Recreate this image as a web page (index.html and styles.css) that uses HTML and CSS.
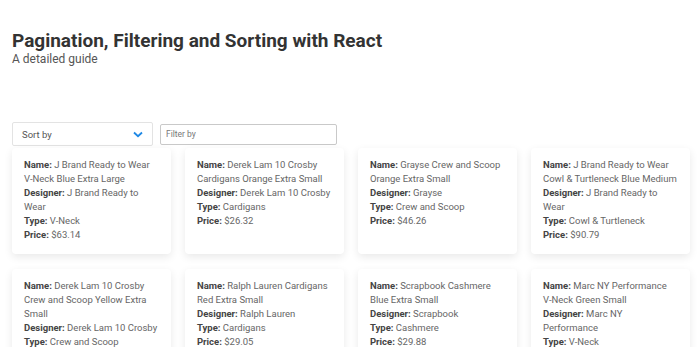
FILE: index.html
```html
<!DOCTYPE html>
<html>
<head>
    <meta charset="utf-8">
    <link rel="stylesheet" href="styles.css">
</head>
<body>
    <header class="intro">
        <h1>Pagination, Filtering and Sorting with React</h1>
        <p>A detailed guide</p>
    </header>

    <div class="controls">
        <div class="sort">
            <span>Sort by</span>
            <svg width="10" height="7" viewBox="0 0 10 7"><path d="M1 1.5 L5 5.2 L9 1.5" fill="none" stroke="#1e88e5" stroke-width="1.8"/></svg>
        </div>
        <input class="filter" type="text" placeholder="Filter by">
    </div>

    <div class="products">
        <div class="card">
            <b>Name:</b> J Brand Ready to Wear <span class="nw">V-Neck</span> Blue Extra Large<br>
            <b>Designer:</b> J Brand Ready to Wear<br>
            <b>Type:</b> V-Neck<br>
            <b>Price:</b> $63.14
        </div>
        <div class="card">
            <b>Name:</b> Derek Lam 10 Crosby Cardigans Orange Extra Small<br>
            <b>Designer:</b> Derek Lam 10 Crosby<br>
            <b>Type:</b> Cardigans<br>
            <b>Price:</b> $26.32
        </div>
        <div class="card">
            <b>Name:</b> Grayse Crew and Scoop Orange Extra Small<br>
            <b>Designer:</b> Grayse<br>
            <b>Type:</b> Crew and Scoop<br>
            <b>Price:</b> $46.26
        </div>
        <div class="card">
            <b>Name:</b> J Brand Ready to Wear Cowl &amp; Turtleneck Blue Medium<br>
            <b>Designer:</b> J Brand Ready to Wear<br>
            <b>Type:</b> Cowl &amp; Turtleneck<br>
            <b>Price:</b> $90.79
        </div>
        <div class="card">
            <b>Name:</b> Derek Lam 10 Crosby Crew and Scoop Yellow Extra Small<br>
            <b>Designer:</b> Derek Lam 10 Crosby<br>
            <b>Type:</b> Crew and Scoop<br>
            <b>Price:</b> $47.12
        </div>
        <div class="card">
            <b>Name:</b> Ralph Lauren Cardigans Red Extra Small<br>
            <b>Designer:</b> Ralph Lauren<br>
            <b>Type:</b> Cardigans<br>
            <b>Price:</b> $29.05
        </div>
        <div class="card">
            <b>Name:</b> Scrapbook Cashmere Blue Extra Small<br>
            <b>Designer:</b> Scrapbook<br>
            <b>Type:</b> Cashmere<br>
            <b>Price:</b> $29.88
        </div>
        <div class="card">
            <b>Name:</b> Marc NY Performance <span class="nw">V-Neck</span> Green Small<br>
            <b>Designer:</b> Marc NY Performance<br>
            <b>Type:</b> V-Neck<br>
            <b>Price:</b> $38.50
        </div>
    </div>
</body>
</html>
```

FILE: styles.css
```css
body {
    margin: 0;
    padding: 0 12px;
    font-family: Roboto, "Liberation Sans", sans-serif;
    color: #333;
    background: #fff;
}

.intro {
    padding-top: 29px;
}

.intro h1 {
    margin: 0;
    font-size: 19px;
    line-height: 23px;
    font-weight: 700;
    color: #333;
}

.intro p {
    margin: 0;
    font-size: 12px;
    line-height: 14px;
    color: #555;
}

.controls {
    display: flex;
    align-items: center;
    gap: 7px;
    margin-top: 56px;
    width: 678px;
}

.sort {
    display: flex;
    align-items: center;
    justify-content: space-between;
    box-sizing: border-box;
    width: 141px;
    height: 24px;
    padding: 0 9px;
    border: 1px solid #e3e3e3;
    border-radius: 2px;
    font-size: 9.5px;
    color: #555;
}

.filter {
    box-sizing: border-box;
    width: 177px;
    height: 21px;
    margin: 0;
    padding: 0 5px;
    border: 1px solid #c9c9c9;
    border-radius: 2px;
    font-family: inherit;
    font-size: 8.5px;
    color: #555;
}

.filter::placeholder {
    color: #777;
}

.products {
    display: grid;
    grid-template-columns: repeat(4, 159px);
    column-gap: 14px;
    row-gap: 15px;
    margin-top: 2px;
}

.card {
    box-sizing: border-box;
    padding: 10px 11px 11px 12px;
    min-height: 106px;
    border-radius: 4px;
    background: #fff;
    box-shadow: 0 3px 8px rgba(0, 0, 0, 0.09);
    font-size: 9.5px;
    line-height: 14px;
    color: #666;
}

.card b {
    color: #444;
    font-weight: 700;
}

.nw {
    white-space: nowrap;
}
```
